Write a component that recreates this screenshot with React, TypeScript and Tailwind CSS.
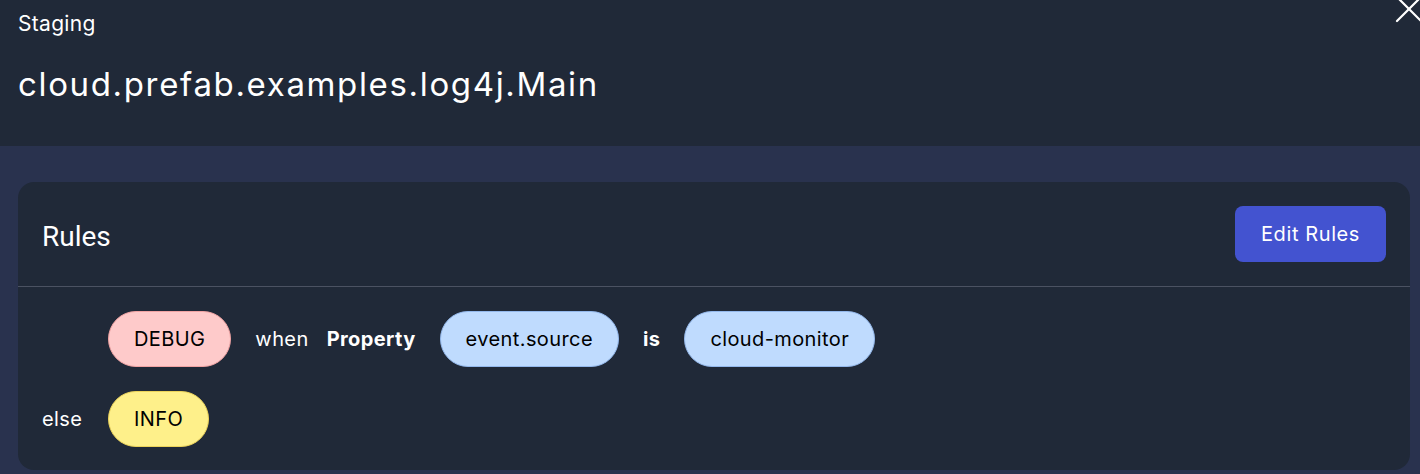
import React from "react";

function Pill({ children, tone }: { children: React.ReactNode; tone: "red" | "blue" | "yellow" }) {
  const cls =
    tone === "red"
      ? "bg-[#fecaca] border-[#f1a3a3]"
      : tone === "blue"
      ? "bg-[#bfdbfe] border-[#93b8ec]"
      : "bg-[#fef08a] border-[#ecd35a]";
  return (
    <span className={`inline-flex h-[56px] items-center rounded-full border px-[25px] text-[20px] tracking-[0.4px] text-black ${cls}`}>
      {children}
    </span>
  );
}

export default function App() {
  return (
    <div className="relative min-h-[474px] w-full overflow-hidden bg-[#29324e] text-white" style={{ fontFamily: "Inter, 'Noto Sans', sans-serif" }}>
      <header className="h-[146px] bg-[#202938] px-[18px] pt-[11px]">
        <div className="text-[21px] leading-[26px] tracking-[0.3px]">Staging</div>
        <h1 className="mt-[27px] text-[33px] leading-[40px] tracking-[1.65px]">cloud.prefab.examples.log4j.Main</h1>
      </header>
      <svg className="absolute right-[-6px] top-[-8px]" width="34" height="34" viewBox="0 0 34 34" fill="none" stroke="white" strokeWidth="2.2" strokeLinecap="round">
        <path d="M5 5 L29 29" />
        <path d="M29 5 L5 29" />
      </svg>
      <main className="pl-[18px] pr-[10px] pt-[36px] pb-[4px]">
        <section className="rounded-[16px] bg-[#202938]">
          <div className="flex h-[104px] items-center justify-between px-[24px]">
            <h2 className="mt-[5px] text-[28px]" style={{ fontFamily: "Roboto, sans-serif" }}>Rules</h2>
            <button className="h-[56px] w-[151px] rounded-[8px] bg-[#4353d0] text-[20px] tracking-[0.6px] text-white">Edit Rules</button>
          </div>
          <div className="h-px bg-[#4b5262]" />
          <div className="grid grid-cols-[66px_auto] gap-y-[24px] px-[24px] pt-[24px] pb-[23px] text-[20px] tracking-[0.4px]">
            <div />
            <div className="flex items-center gap-[24px]">
              <Pill tone="red">DEBUG</Pill>
              <span className="flex items-center gap-[18px]">
                <span>when</span>
                <span className="font-bold">Property</span>
              </span>
              <Pill tone="blue">event.source</Pill>
              <span className="font-bold">is</span>
              <Pill tone="blue">cloud-monitor</Pill>
            </div>
            <div className="flex items-center">else</div>
            <div className="flex items-center">
              <Pill tone="yellow">INFO</Pill>
            </div>
          </div>
        </section>
      </main>
    </div>
  );
}
